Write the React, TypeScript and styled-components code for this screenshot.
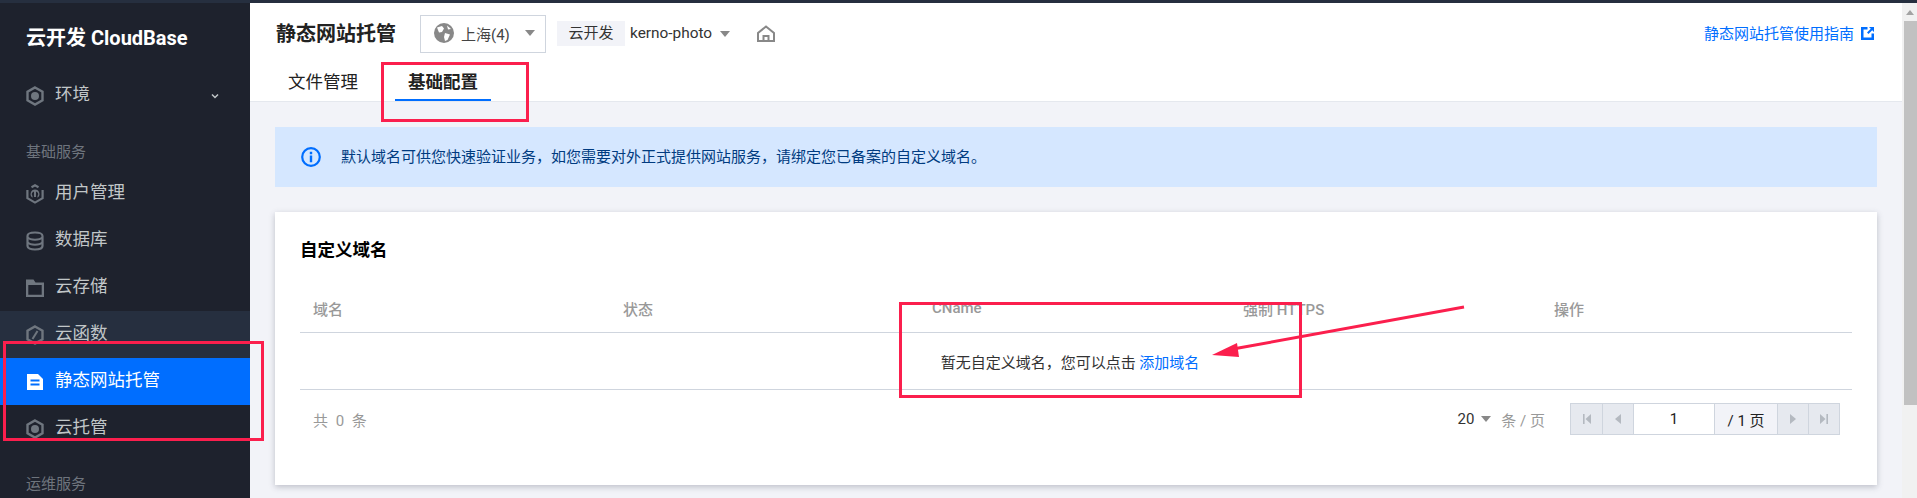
import React from "react";
import styled, { createGlobalStyle } from "styled-components";

const GlobalStyle = createGlobalStyle`
	html, body {
		margin: 0;
		height: 100%;
		overflow: hidden;
	}
	body {
		font-family: Roboto, "Noto Sans CJK SC", "Noto Sans", sans-serif;
		font-size: 15px;
		color: #222;
	}
`;

const Page = styled.div`
	position: relative;
	width: 1917px;
	height: 498px;
	display: flex;
	flex-direction: column;
	overflow: hidden;
	background: #f2f3f8;
`;

const TopStrip = styled.div`
	height: 3px;
	flex: none;
	background: #262f3f;
`;

const Body = styled.div`
	flex: 1;
	min-height: 0;
	display: flex;
`;

/* sidebar */
const Sidebar = styled.aside`
	width: 250px;
	flex: none;
	background: #1e222d;
	color: #c1c6c8;
`;

const Brand = styled.div`
	height: 66px;
	margin-bottom: 3px;
	padding-left: 26px;
	display: flex;
	align-items: center;
	font-size: 20px;
	font-weight: 700;
	color: #fff;
`;

const NavItem = styled.div<{ $active?: boolean; $hover?: boolean }>`
	height: 47px;
	display: flex;
	align-items: center;
	gap: 11px;
	padding: 0 26px;
	font-size: 17.5px;
	color: ${(p) => (p.$active ? "#fff" : "#c1c6c8")};
	background: ${(p) =>
		p.$active ? "#006eff" : p.$hover ? "#262f3f" : "transparent"};
`;

const NavLabel = styled.span`
	margin-bottom: 6px;
`;

const NavIcon = styled.svg`
	width: 18px;
	height: 20px;
	flex: none;
`;

const Chevron = styled.svg`
	width: 10px;
	height: 10px;
	margin-left: auto;
	margin-right: 4px;
`;

const NavGroup = styled.div<{ $top: number }>`
	margin-top: ${(p) => p.$top}px;
	height: 24px;
	line-height: 24px;
	padding-left: 26px;
	font-size: 15px;
	color: #6e747d;
`;

const GroupGap = styled.div`
	height: 6px;
`;

/* main */
const Main = styled.main`
	flex: 1;
	min-width: 0;
	display: flex;
	flex-direction: column;
`;

const Header = styled.header`
	height: 99px;
	flex: none;
	box-sizing: border-box;
	background: #fff;
	border-bottom: 1px solid #e5e8ee;
`;

const HeaderTop = styled.div`
	height: 50px;
	padding: 12px 28px 0 26px;
	box-sizing: border-box;
	display: flex;
	align-items: center;
`;

const PageTitle = styled.h1`
	margin: 0;
	padding-bottom: 4px;
	font-size: 20px;
	font-weight: 700;
	color: #222;
	width: 144px;
`;

const RegionSelect = styled.div`
	width: 126px;
	height: 38px;
	box-sizing: border-box;
	border: 1px solid #cfd5de;
	display: flex;
	align-items: center;
	padding-left: 13px;
	padding-bottom: 2px;
	gap: 7px;
	font-size: 15px;
	color: #444;
`;

const Caret = styled.span<{ $gap: number; $color?: string }>`
	width: 0;
	height: 0;
	margin-left: ${(p) => p.$gap}px;
	border-left: 5px solid transparent;
	border-right: 5px solid transparent;
	border-top: 6px solid ${(p) => p.$color || "#888"};
`;

const EnvTag = styled.span`
	margin-left: 11px;
	margin-bottom: 2px;
	width: 68px;
	height: 25px;
	line-height: 25px;
	text-align: center;
	background: #f2f3f8;
	font-size: 15px;
	color: #333;
`;

const EnvName = styled.span`
	margin-left: 5px;
	margin-bottom: 2px;
	font-size: 15.4px;
	color: #333;
`;

const HomeIcon = styled.svg`
	width: 18px;
	height: 17px;
	margin-left: 27px;
	margin-bottom: 2px;
`;

const GuideLink = styled.a`
	margin-left: auto;
	padding-bottom: 3px;
	display: flex;
	align-items: center;
	gap: 7px;
	font-size: 15px;
	color: #006eff;
`;

const Tabs = styled.nav`
	height: 48px;
	display: flex;
	gap: 24px;
	padding-left: 25px;
`;

const Tab = styled.div<{ $active?: boolean }>`
	height: 48px;
	box-sizing: border-box;
	padding: 9px 13px 0;
	display: flex;
	align-items: center;
	font-size: 17.5px;
	font-weight: ${(p) => (p.$active ? 700 : 400)};
	color: #222;
	border-bottom: 2px solid ${(p) => (p.$active ? "#006eff" : "transparent")};
`;

const Content = styled.div`
	flex: 1;
	padding: 25px 25px 0;
`;

const Notice = styled.div`
	height: 60px;
	display: flex;
	align-items: center;
	gap: 20px;
	padding-left: 26px;
	background: #d5e7ff;
	color: #003b80;
	font-size: 15px;
`;

const NoticeText = styled.span`
	margin-bottom: 3px;
`;

const Card = styled.section`
	margin-top: 25px;
	height: 273px;
	box-sizing: border-box;
	padding: 0 25px;
	background: #fff;
	box-shadow: 0 2px 6px rgba(54, 58, 80, 0.28);
`;

const CardTitle = styled.h2`
	margin: 0;
	height: 72px;
	display: flex;
	align-items: center;
	font-size: 17.5px;
	font-weight: 700;
	color: #000;
`;

const Table = styled.table`
	width: 100%;
	table-layout: fixed;
	border-collapse: collapse;
`;

const Col = styled.col<{ $w: number }>`
	width: ${(p) => p.$w}px;
`;

const Th = styled.th`
	height: 48px;
	padding: 0 13px;
	text-align: left;
	font-weight: 500;
	font-size: 15px;
	color: #999;
	border-bottom: 1px solid #cfd5de;
`;

const EmptyCell = styled.td`
	height: 56px;
	padding: 0 12px 0 0;
	text-align: center;
	font-size: 15px;
	color: #333;
	border-bottom: 1px solid #cfd5de;
`;

const AddLink = styled.a`
	color: #006eff;
`;

const TableFooter = styled.div`
	display: flex;
	align-items: center;
	margin-top: 13px;
	padding: 0 12px 0 13px;
	height: 32px;
`;

const Total = styled.span`
	color: #999;
	font-size: 15px;
	word-spacing: 4px;
`;

const PageSize = styled.span`
	margin-left: auto;
	font-size: 15px;
	color: #333;
	display: flex;
	align-items: center;
`;

const PageSizeUnit = styled.span`
	margin-left: 10px;
	color: #999;
`;

const Pager = styled.div`
	margin-left: 25px;
	height: 32px;
	box-sizing: border-box;
	display: flex;
	border: 1px solid #cfd5de;
`;

const PagerButton = styled.div<{ $first?: boolean }>`
	width: 31px;
	box-sizing: border-box;
	display: flex;
	align-items: center;
	justify-content: center;
	background: #e6e9ef;
	border-left: ${(p) => (p.$first ? "none" : "1px solid #cfd5de")};
`;

const PagerInput = styled.div`
	width: 81px;
	box-sizing: border-box;
	display: flex;
	align-items: center;
	justify-content: center;
	background: #fff;
	border-left: 1px solid #cfd5de;
	color: #222;
`;

const PagerCount = styled.div`
	width: 63px;
	box-sizing: border-box;
	display: flex;
	align-items: center;
	justify-content: center;
	background: #f2f3f8;
	border-left: 1px solid #cfd5de;
	color: #222;
`;

const PagerIcon = styled.svg`
	width: 10px;
	height: 12px;
`;

/* browser scrollbar */
const ScrollTrack = styled.div`
	width: 15px;
	flex: none;
	display: flex;
	flex-direction: column;
	background: #f1f1f1;
`;

const ScrollArrow = styled.div`
	height: 18px;
	display: flex;
	align-items: center;
	justify-content: center;
	&::before {
		content: "";
		border-left: 4px solid transparent;
		border-right: 4px solid transparent;
		border-bottom: 5px solid #a3a3a3;
	}
`;

const ScrollThumb = styled.div`
	height: 384px;
	margin-left: 2px;
	background: #c1c1c1;
`;

/* red marks drawn over the screenshot */
const Mark = styled.div<{ $l: number; $t: number; $w: number; $h: number }>`
	position: absolute;
	left: ${(p) => p.$l}px;
	top: ${(p) => p.$t}px;
	width: ${(p) => p.$w}px;
	height: ${(p) => p.$h}px;
	box-sizing: border-box;
	border: 3px solid #fb1f4d;
	pointer-events: none;
`;

const ArrowMark = styled.svg`
	position: absolute;
	left: 1205px;
	top: 300px;
	width: 265px;
	height: 65px;
`;

const Hexagon: React.FC<{ color?: string }> = ({ color = "#6f767f" }) => (
	<NavIcon viewBox="0 0 18 20">
		<polygon points="9,1.5 16.5,5.7 16.5,14.3 9,18.5 1.5,14.3 1.5,5.7" fill="none" stroke={color} strokeWidth="2.4" />
		<circle cx="9" cy="10" r="4" fill={color} />
	</NavIcon>
);

const UserIcon = () => (
	<NavIcon viewBox="0 0 18 20">
		<path d="M5.5 3.2 9 1.3l3.5 1.9M16.6 6v8.2L9 18.6 1.4 14.2V6" fill="none" stroke="#6f767f" strokeWidth="2.2" />
		<path d="M9 5.5a4.5 4.5 0 0 1 2.5 8.2V12a2.8 2.8 0 0 0-1.5-4.6V13H8V7.4A2.8 2.8 0 0 0 6.5 12v1.7A4.5 4.5 0 0 1 9 5.5z" fill="#6f767f" />
	</NavIcon>
);

const DatabaseIcon = () => (
	<NavIcon viewBox="0 0 18 20">
		<path d="M1.5 5c0-2 3-3.5 7.5-3.5s7.5 1.5 7.5 3.500v10c0 2-3 3.500-7.500 3.500s-7.500-1.500-7.500-3.500z" fill="none" stroke="#6f767f" strokeWidth="2.2" />
		<path d="M1.500 6.500c1.500 1.500 4 2.200 7.500 2.200s6-.7 7.500-2.200M1.500 11.500c1.500 1.500 4 2.200 7.500 2.200s6-.7 7.500-2.200" fill="none" stroke="#6f767f" strokeWidth="2" />
	</NavIcon>
);

const FolderIcon = () => (
	<NavIcon viewBox="0 0 18 20">
		<path d="M0 1.500h7.500l2 3H18v14.500H0zM2.300 7v9.700h13.400V7z" fill="#6f767f" fillRule="evenodd" />
	</NavIcon>
);

const FunctionIcon = () => (
	<NavIcon viewBox="0 0 18 20">
		<polygon points="9,1.500 16.500,5.700 16.500,14.300 9,18.500 1.500,14.300 1.500,5.700" fill="none" stroke="#6f767f" strokeWidth="2.400" />
		<path d="M11.500 6 6.500 14" stroke="#6f767f" strokeWidth="2" />
	</NavIcon>
);

const DocIcon = () => (
	<NavIcon viewBox="0 0 18 20">
		<path d="M1 2h11l5 5v11H1z" fill="#fff" />
		<path d="M4.500 8.500h9M4.500 12.500h9" stroke="#006eff" strokeWidth="2" />
	</NavIcon>
);

const PagerArrow: React.FC<{ dir: "first" | "prev" | "next" | "last" }> = ({ dir }) => (
	<PagerIcon viewBox="0 0 10 12">
		{dir === "first" && <path d="M1 1h1.600v10H1zM9 1v10L3.500 6z" fill="#b4b9c0" />}
		{dir === "prev" && <path d="M8 1v10L2 6z" fill="#b4b9c0" />}
		{dir === "next" && <path d="M2 1v10l6-5z" fill="#b4b9c0" />}
		{dir === "last" && <path d="M9 1H7.400v10H9zM1 1v10l5.500-5z" fill="#b4b9c0" />}
	</PagerIcon>
);

const App: React.FC = () => {
	return (
		<Page>
			<GlobalStyle />
			<TopStrip />
			<Body>
				<Sidebar>
					<Brand>云开发 CloudBase</Brand>
					<NavItem>
						<Hexagon />
						<NavLabel>环境</NavLabel>
						<Chevron viewBox="0 0 10 10">
							<path d="M2 3.500 5 6.500 8 3.500" fill="none" stroke="#c1c6c8" strokeWidth="1.500" />
						</Chevron>
					</NavItem>
					<NavGroup $top={21}>基础服务</NavGroup>
					<GroupGap />
					<NavItem><UserIcon /><NavLabel>用户管理</NavLabel></NavItem>
					<NavItem><DatabaseIcon /><NavLabel>数据库</NavLabel></NavItem>
					<NavItem><FolderIcon /><NavLabel>云存储</NavLabel></NavItem>
					<NavItem $hover><FunctionIcon /><NavLabel>云函数</NavLabel></NavItem>
					<NavItem $active><DocIcon /><NavLabel>静态网站托管</NavLabel></NavItem>
					<NavItem><Hexagon /><NavLabel>云托管</NavLabel></NavItem>
					<NavGroup $top={20}>运维服务</NavGroup>
				</Sidebar>
				<Main>
					<Header>
						<HeaderTop>
							<PageTitle>静态网站托管</PageTitle>
							<RegionSelect>
								<svg width="20" height="20" viewBox="0 0 20 20">
									<circle cx="10" cy="10" r="10" fill="#888" />
									<path d="M3 4.500 8 3l2 2.500-2 3.500-3 .5zM11 10l5 1.500-2.500 5.500-2.500 1-1-4zM13 2.500 17 6l-3 .5z" fill="#fff" />
								</svg>
								上海(4)
								<Caret $gap={8} />
							</RegionSelect>
							<EnvTag>云开发</EnvTag>
							<EnvName>kerno-photo</EnvName>
							<Caret $gap={8} />
							<HomeIcon viewBox="0 0 18 17">
								<path d="M9 1.500 17 8v8H1V8z" fill="none" stroke="#888" strokeWidth="2" />
								<path d="M6.500 16v-5h5v5" fill="none" stroke="#888" strokeWidth="2" />
							</HomeIcon>
							<GuideLink>
								静态网站托管使用指南
								<svg width="13" height="14" viewBox="0 0 13 14">
									<path d="M0 1h6.500v2.500h-4v8h8v-4H13V14H0z" fill="#006eff" />
									<path d="M8 1h5v5l-1.800-1.800L7.500 8 6 6.500l3.800-3.700z" fill="#006eff" />
								</svg>
							</GuideLink>
						</HeaderTop>
						<Tabs>
							<Tab>文件管理</Tab>
							<Tab $active>基础配置</Tab>
						</Tabs>
					</Header>
					<Content>
						<Notice>
							<svg width="20" height="20" viewBox="0 0 20 20">
								<circle cx="10" cy="10" r="8.800" fill="none" stroke="#006eff" strokeWidth="2.200" />
								<path d="M8.800 4.800h2.400v2.400H8.800zM8.800 8.500h2.400v6.700H8.800z" fill="#006eff" />
							</svg>
							<NoticeText>默认域名可供您快速验证业务，如您需要对外正式提供网站服务，请绑定您已备案的自定义域名。</NoticeText>
						</Notice>
						<Card>
							<CardTitle>自定义域名</CardTitle>
							<Table>
								<colgroup>
									<Col $w={310} />
									<Col $w={309} />
									<Col $w={311} />
									<Col $w={311} />
									<Col $w={311} />
								</colgroup>
								<thead>
									<tr>
										<Th>域名</Th>
										<Th>状态</Th>
										<Th>CName</Th>
										<Th>强制 HTTPS</Th>
										<Th>操作</Th>
									</tr>
								</thead>
								<tbody>
									<tr>
										<EmptyCell colSpan={5}>
											暂无自定义域名，您可以点击 <AddLink>添加域名</AddLink>
										</EmptyCell>
									</tr>
								</tbody>
							</Table>
							<TableFooter>
								<Total>共 0 条</Total>
								<PageSize>
									20
									<Caret $gap={7} />
									<PageSizeUnit>条 / 页</PageSizeUnit>
								</PageSize>
								<Pager>
									<PagerButton $first><PagerArrow dir="first" /></PagerButton>
									<PagerButton><PagerArrow dir="prev" /></PagerButton>
									<PagerInput>1</PagerInput>
									<PagerCount>/ 1 页</PagerCount>
									<PagerButton><PagerArrow dir="next" /></PagerButton>
									<PagerButton><PagerArrow dir="last" /></PagerButton>
								</Pager>
							</TableFooter>
						</Card>
					</Content>
				</Main>
				<ScrollTrack>
					<ScrollArrow />
					<ScrollThumb />
				</ScrollTrack>
			</Body>

			<Mark $l={3} $t={341} $w={261} $h={100} />
			<Mark $l={381} $t={62} $w={148} $h={60} />
			<Mark $l={899} $t={302} $w={403} $h={96} />
			<ArrowMark viewBox="0 0 265 65">
				<path d="M259 7 28 49" stroke="#fb1f4d" strokeWidth="3" fill="none" />
				<polygon points="7,55 32,43 34,57" fill="#fb1f4d" />
			</ArrowMark>
		</Page>
	);
};

export default App;
